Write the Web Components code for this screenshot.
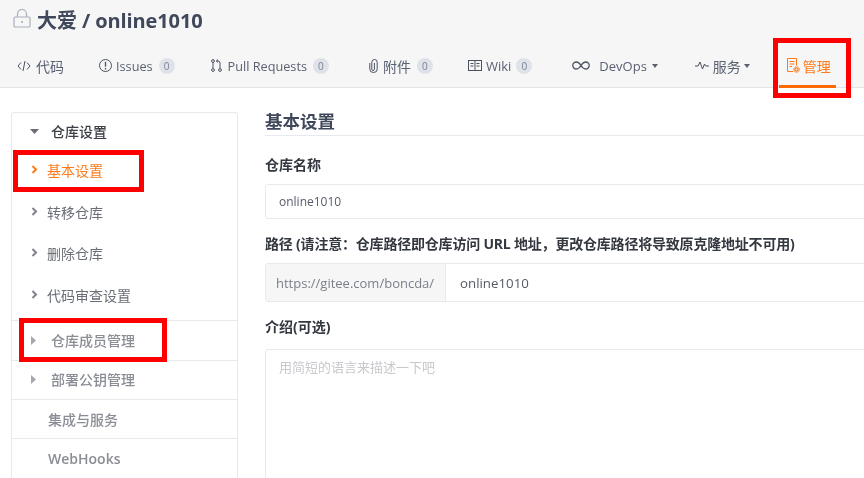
<!DOCTYPE html>
<html lang="zh">
<head>
<meta charset="utf-8">
<title>online1010</title>
<style>
    html, body { margin: 0; height: 100%; background: #fff; overflow: hidden; }
    body { font-family: "Open Sans", "Noto Sans CJK SC", sans-serif; color: #40485b; }
    svg { display: block; }
</style>
</head>
<body>
<repo-page></repo-page>

<script>
const pageTemplate = document.createElement("template");
pageTemplate.innerHTML = `
    <style>
        :host { display: block; width: 864px; height: 478px; overflow: hidden; position: relative; filter: blur(0.35px); }
        #body { display: flex; padding: 24px 0 0 11px; }
        #side { flex: none; width: 227px; }
        #main { flex: none; width: 640px; margin: -2px 0 0 27px; }
    </style>
    <slot name="header"></slot>
    <div id="body">
        <div id="side"><slot name="side"></slot></div>
        <div id="main"><slot name="main"></slot></div>
    </div>
    <slot name="marks"></slot>
`;
class RepoPage extends HTMLElement {
    constructor() {
        super();
        this.attachShadow({mode: "open"}).appendChild(pageTemplate.content.cloneNode(true));
    }
}
customElements.define("repo-page", RepoPage);

const headerTemplate = document.createElement("template");
headerTemplate.innerHTML = `
    <style>
        :host { display: block; height: 88px; box-sizing: border-box; background: #f6f6f6; border-bottom: 1px solid #e3e3e3; }
        #title { display: flex; align-items: center; box-sizing: border-box; height: 42px; padding: 0 0 4px 13px; font-size: 20px; font-weight: 700; letter-spacing: -0.1px; color: #40485b; }
        #title svg { margin: -2px 6px 0 0; display: block; }
        #tabs { display: flex; align-items: stretch; height: 45px; padding-left: 17px; }
    </style>
    <div id="title">
        <svg width="18" height="19" viewBox="0 0 18 19" fill="none" stroke="#a9afbc" stroke-width="1.2"><rect x="1" y="8" width="16" height="10" rx="1"/><path d="M4.5 8V5a4.5 4.5 0 0 1 9 0v3"/><path d="M9 12v2" stroke-width="1.6"/></svg>
        <span id="label"></span>
    </div>
    <div id="tabs"><slot></slot></div>
`;
class RepoHeader extends HTMLElement {
    constructor() {
        super();
        this.attachShadow({mode: "open"}).appendChild(headerTemplate.content.cloneNode(true));
        this.shadowRoot.getElementById("label").textContent = this.getAttribute("owner") + " / " + this.getAttribute("name");
    }
}
customElements.define("repo-header", RepoHeader);

const tabTemplate = document.createElement("template");
tabTemplate.innerHTML = `
    <style>
        :host { display: flex; align-items: center; flex: none; box-sizing: border-box; padding-top: 2px; margin-right: var(--gap, 36px); font-size: 14px; color: #5a6172; white-space: nowrap; position: relative; }
        :host([latin]) { font-size: var(--latin-size, 12.7px); }
        :host([active]) { color: #ff7a1a; }
        :host([active])::after { content: ""; position: absolute; left: -7px; right: -5px; bottom: -1px; height: 3px; background: #ff6a00; }
        #icon { display: block; margin-right: var(--icon-gap, 4px); }
        #count { display: none; margin-left: var(--count-gap, 6px); width: 16px; height: 16px; border-radius: 50%; background: #dfe2e8; color: #7a8296; font-size: 10px; line-height: 16px; text-align: center; }
        #caret { display: none; margin-left: var(--caret-gap, 5px); width: 0; height: 0; border-left: 3.5px solid transparent; border-right: 3.5px solid transparent; border-top: 4px solid #5a6172; }
    </style>
    <slot id="icon" name="icon"></slot>
    <slot></slot>
    <span id="count"></span>
    <span id="caret"></span>
`;
class RepoTab extends HTMLElement {
    constructor() {
        super();
        this.attachShadow({mode: "open"}).appendChild(tabTemplate.content.cloneNode(true));
        const count = this.getAttribute("count");
        if (count !== null) {
            const elem = this.shadowRoot.getElementById("count");
            elem.textContent = count;
            elem.style.display = "block";
        }
        if (this.hasAttribute("menu")) {
            this.shadowRoot.getElementById("caret").style.display = "block";
        }
    }
}
customElements.define("repo-tab", RepoTab);

const menuTemplate = document.createElement("template");
menuTemplate.innerHTML = `
    <style>
        :host { display: block; box-sizing: border-box; height: 400px; border: 1px solid #e6e9ee; border-bottom: 0; border-radius: 3px 3px 0 0; font-size: 14px; }
    </style>
    <slot></slot>
`;
class SideMenu extends HTMLElement {
    constructor() {
        super();
        this.attachShadow({mode: "open"}).appendChild(menuTemplate.content.cloneNode(true));
    }
}
customElements.define("side-menu", SideMenu);

const rowTemplate = document.createElement("template");
rowTemplate.innerHTML = `
    <style>
        :host { display: flex; align-items: center; box-sizing: border-box; height: 39px; color: #8a8d94; font-weight: 500; white-space: nowrap; }
        :host([kind="head"]) { height: 36px; color: #3c3f46; }
        :host([kind="item"]) { height: 41.6px; color: #6a6e76; font-weight: 400; }
        :host([kind="item"][active]) { color: #ff7a1a; }
        :host([kind="last"]) { height: 47px; padding-bottom: 4px; color: #6a6e76; font-weight: 400; border-bottom: 1px solid #e6e9ee; }
        :host([divider]) { border-bottom: 1px solid #e6e9ee; }
        #mark { flex: none; width: 39px; display: flex; padding-left: 19px; box-sizing: border-box; }
        :host([kind="head"]) #mark { padding-left: 18px; }
        :host([kind="item"]) #mark, :host([kind="last"]) #mark { width: 35px; }
        :host([kind="plain"]) #mark { width: 36px; }
    </style>
    <span id="mark"><slot name="mark"></slot></span>
    <slot></slot>
`;
class SideRow extends HTMLElement {
    constructor() {
        super();
        this.attachShadow({mode: "open"}).appendChild(rowTemplate.content.cloneNode(true));
    }
}
customElements.define("side-row", SideRow);

const sectionTemplate = document.createElement("template");
sectionTemplate.innerHTML = `
    <style>
        :host { display: block; box-sizing: content-box; font-weight: 700; font-size: 17.5px; color: #40485b; height: 25px; margin-bottom: 19px; border-bottom: 1px solid #e8e9ee; line-height: 22px; }
    </style>
    <slot></slot>
`;
class SectionTitle extends HTMLElement {
    constructor() {
        super();
        this.attachShadow({mode: "open"}).appendChild(sectionTemplate.content.cloneNode(true));
    }
}
customElements.define("section-title", SectionTitle);

const fieldTemplate = document.createElement("template");
fieldTemplate.innerHTML = `
    <style>
        :host { display: block; margin-bottom: 15px; }
        label { display: block; font-size: 14px; line-height: 19px; margin-bottom: 10px; font-weight: 700; color: #33373f; white-space: nowrap; }
    </style>
    <label><slot name="label"></slot></label>
    <slot></slot>
`;
class FormField extends HTMLElement {
    constructor() {
        super();
        this.attachShadow({mode: "open"}).appendChild(fieldTemplate.content.cloneNode(true));
    }
}
customElements.define("form-field", FormField);

const boxTemplate = document.createElement("template");
boxTemplate.innerHTML = `
    <style>
        :host { display: flex; align-items: stretch; box-sizing: border-box; border: 1px solid #e8e9ef; border-radius: 3px; font-size: 12px; color: #555b68; }
        :host([tall]) { height: 200px; }
        #addon { display: none; align-items: center; flex: none; width: 180px; box-sizing: border-box; padding-left: 10px; background: #f6f6f6; border-right: 1px solid #e8e9ef; font-size: 13px; color: #7a7f8a; }
        #value { display: flex; align-items: center; padding-left: 13px; }
        :host([addon]) #value { font-size: 13.3px; padding-left: 14px; }
        :host([tall]) #value { align-items: flex-start; padding-top: 7px; font-size: 13px; color: #c8c9cd; }
    </style>
    <span id="addon"></span>
    <span id="value"><slot></slot></span>
`;
class TextBox extends HTMLElement {
    constructor() {
        super();
        this.attachShadow({mode: "open"}).appendChild(boxTemplate.content.cloneNode(true));
        const addon = this.getAttribute("addon");
        if (addon) {
            const elem = this.shadowRoot.getElementById("addon");
            elem.textContent = addon;
            elem.style.display = "flex";
        }
    }
}
customElements.define("text-box", TextBox);

// red boxes somebody drew on top of the screenshot
const markTemplate = document.createElement("template");
markTemplate.innerHTML = `
    <style>
        :host { display: block; position: absolute; box-sizing: border-box; border: 5px solid #ff0000; }
    </style>
`;
class RedMark extends HTMLElement {
    constructor() {
        super();
        this.attachShadow({mode: "open"}).appendChild(markTemplate.content.cloneNode(true));
    }
}
customElements.define("red-mark", RedMark);

const chevron = c => `<svg slot="mark" width="7" height="9" viewBox="0 0 7 9" fill="none" stroke="${c}" stroke-width="2"><path d="M1.5 1 5 4.5 1.5 8"/></svg>`;
const caretDown = `<svg slot="mark" width="9" height="5" viewBox="0 0 9 5" fill="#6a6e76"><path d="M0 0h9L4.5 5z"/></svg>`;
const caretRight = `<svg slot="mark" width="5" height="9" viewBox="0 0 5 9" fill="#a4a7ad"><path d="M0 0l5 4.5L0 9z"/></svg>`;

const icons = {
    code: `<svg slot="icon" width="14" height="12" viewBox="0 0 14 12" fill="none" stroke="#4a5160"><path d="M4 2.5 1 6l3 3.5M10 2.5 13 6l-3 3.5M8 1 6 11"/></svg>`,
    issue: `<svg slot="icon" width="13" height="13" viewBox="0 0 13 13" fill="none" stroke="#4a5160"><circle cx="6.5" cy="6.5" r="6"/><path d="M6.5 2.8v5M6.5 9v1.4" stroke-width="1.3"/></svg>`,
    pull: `<svg slot="icon" width="11" height="13" viewBox="0 0 11 13" fill="none" stroke="#4a5160"><circle cx="2" cy="2" r="1.4"/><circle cx="2" cy="11" r="1.4"/><circle cx="9" cy="11" r="1.4"/><path d="M2 3.5v6M9 9.5V4Q9 2 7 2H5.5M7 .5 5.3 2 7 3.5"/></svg>`,
    clip: `<svg slot="icon" width="9" height="14" viewBox="0 0 9 14" fill="none" stroke="#4a5160"><path d="M.8 4v6.2a3.7 3.3 0 0 0 7.4 0V3.2a2.7 2.7 0 0 0-5.4 0v7a1.3 1.3 0 0 0 2.6 0V4"/></svg>`,
    wiki: `<svg slot="icon" width="14" height="11" viewBox="0 0 14 11" fill="none" stroke="#4a5160"><rect x=".5" y=".5" width="13" height="10"/><path d="M7 .5v10M2.5 3.5h3M2.5 6h3M8.5 3.5h3M8.5 6h3"/></svg>`,
    devops: `<svg slot="icon" width="18" height="9" viewBox="0 0 18 9" fill="none" stroke="#4a5160" stroke-width="1.3"><path d="M9 4.5C7.5 2 6 1 4.3 1a3.5 3.5 0 0 0 0 7C6 8 7.5 7 9 4.5S12 1 13.7 1a3.5 3.5 0 0 1 0 7C12 8 10.5 7 9 4.5z"/></svg>`,
    pulse: `<svg slot="icon" width="14" height="9" viewBox="0 0 14 9" fill="none" stroke="#4a5160"><path d="M0 5h3l2-4 2.5 7L9.5 3l1 2H14"/></svg>`,
    manage: `<svg slot="icon" width="14" height="15" viewBox="0 0 14 15" fill="none" stroke="#ff7a1a"><path d="M7 13.5H1.500V.5h9v7M3.500 3.500h5M3.500 6h5M3.500 8.500h2.500"/><circle cx="10.500" cy="11.500" r="1.600" stroke-width="1.400"/><circle cx="10.500" cy="11.500" r="3" stroke-dasharray="1.200 1.150"/></svg>`
};

function tab(label, icon, extra) {
    return `<repo-tab ${extra || ""}>${icons[icon]}${label}</repo-tab>`;
}

document.querySelector("repo-page").innerHTML = `
    <repo-header slot="header" owner="大爱" name="online1010">
        ${tab("代码", "code", 'style="--icon-gap:5px;--gap:35px"')}
        ${tab("Issues", "issue", 'latin count="0"')}
        ${tab("Pull Requests", "pull", 'latin count="0" style="--icon-gap:6px;--gap:40px"')}
        ${tab("附件", "clip", 'count="0" style="--icon-gap:5px;--gap:35px"')}
        ${tab("Wiki", "wiki", 'latin count="0" style="--latin-size:13px;--count-gap:5px;--gap:40px"')}
        ${tab("DevOps", "devops", 'latin menu style="--latin-size:13px;--icon-gap:9px;--gap:37px"')}
        ${tab("服务", "pulse", 'menu style="--caret-gap:3px;--gap:36px"')}
        ${tab("管理", "manage", 'active style="--icon-gap:3px"')}
    </repo-header>
    <side-menu slot="side">
        <side-row kind="head">${caretDown}仓库设置</side-row>
        <side-row kind="item" active>${chevron("#ff7a1a")}基本设置</side-row>
        <side-row kind="item" style="padding-top:1px">${chevron("#7d828c")}转移仓库</side-row>
        <side-row kind="item">${chevron("#7d828c")}删除仓库</side-row>
        <side-row kind="last">${chevron("#7d828c")}代码审查设置</side-row>
        <side-row divider style="height:40px">${caretRight}仓库成员管理</side-row>
        <side-row divider style="padding-bottom:1px">${caretRight}部署公钥管理</side-row>
        <side-row kind="plain" divider>集成与服务</side-row>
        <side-row kind="plain" style="font-weight:600">WebHooks</side-row>
    </side-menu>
    <div slot="main">
        <section-title>基本设置</section-title>
        <form-field>
            <span slot="label">仓库名称</span>
            <text-box style="height:35px">online1010</text-box>
        </form-field>
        <form-field>
            <span slot="label" style="letter-spacing:-0.2px">路径 (请注意：仓库路径即仓库访问 URL 地址，更改仓库路径将导致原克隆地址不可用)</span>
            <text-box style="height:39px" addon="https://gitee.com/boncda/">online1010</text-box>
        </form-field>
        <form-field>
            <span slot="label">介绍(可选)</span>
            <text-box tall style="margin-top:13px">用简短的语言来描述一下吧</text-box>
        </form-field>
    </div>
    <red-mark slot="marks" style="left:773px;top:38px;width:78px;height:60px"></red-mark>
    <red-mark slot="marks" style="left:13px;top:150px;width:131px;height:42px"></red-mark>
    <red-mark slot="marks" style="left:19px;top:318px;width:148px;height:44px"></red-mark>
`;
</script>
</body>
</html>
